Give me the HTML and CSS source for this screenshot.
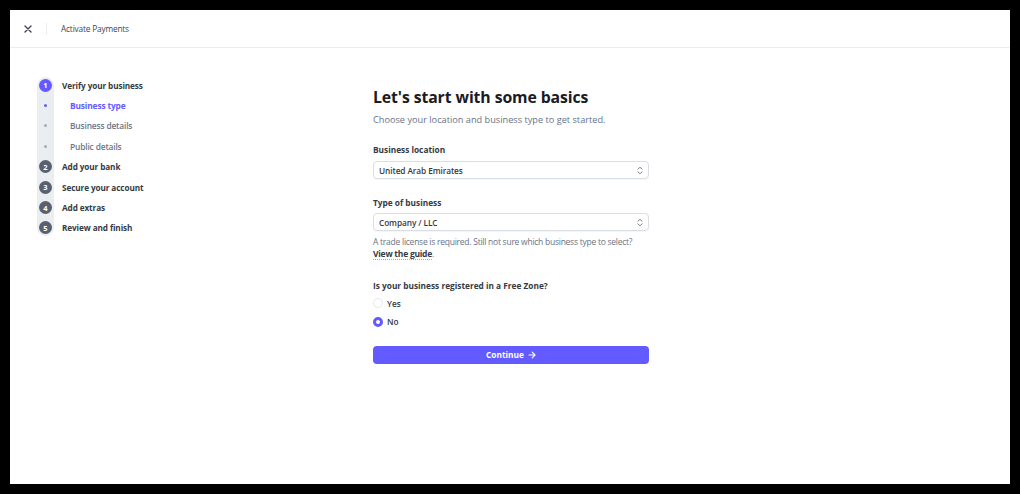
FILE: index.html
```html
<!DOCTYPE html>
<html lang="en">
<head>
  <meta charset="UTF-8">
  <meta name="viewport" content="width=device-width, initial-scale=1.0">
  <title>Activate Payments</title>
  <link rel="stylesheet" href="styles.css">
</head>
<body>
  <div class="app">
    <header class="topbar">
      <button class="close-btn" aria-label="Close">
        <svg width="8" height="8" viewBox="0 0 8 8"><path d="M1 1l6 6M7 1L1 7" stroke="#414552" stroke-width="1.4" stroke-linecap="round"/></svg>
      </button>
      <span class="divider"></span>
      <span class="topbar-title">Activate Payments</span>
    </header>

    <div class="page">
      <!-- 左側のステップ一覧 -->
      <nav class="steps">
        <ul class="step-list">
          <li class="step active"><span class="marker num">1</span><span class="step-label">Verify your business</span></li>
          <li class="step sub current"><span class="marker"><span class="dot"></span></span><span class="step-label">Business type</span></li>
          <li class="step sub"><span class="marker"><span class="dot"></span></span><span class="step-label">Business details</span></li>
          <li class="step sub"><span class="marker"><span class="dot"></span></span><span class="step-label">Public details</span></li>
          <li class="step"><span class="marker num">2</span><span class="step-label">Add your bank</span></li>
          <li class="step"><span class="marker num">3</span><span class="step-label">Secure your account</span></li>
          <li class="step"><span class="marker num">4</span><span class="step-label">Add extras</span></li>
          <li class="step"><span class="marker num">5</span><span class="step-label">Review and finish</span></li>
        </ul>
      </nav>

      <main class="form">
        <h1>Let's start with some basics</h1>
        <p class="subtitle">Choose your location and business type to get started.</p>

        <div class="field">
          <label class="field-label">Business location</label>
          <div class="select">
            <span>United Arab Emirates</span>
            <svg width="6" height="9" viewBox="0 0 6 9"><path d="M1 3.2L3 1.2l2 2M1 5.8l2 2 2-2" fill="none" stroke="#6c7688" stroke-width="1" stroke-linecap="round" stroke-linejoin="round"/></svg>
          </div>
        </div>

        <div class="field field-type">
          <label class="field-label">Type of business</label>
          <div class="select">
            <span>Company / LLC</span>
            <svg width="6" height="9" viewBox="0 0 6 9"><path d="M1 3.2L3 1.2l2 2M1 5.8l2 2 2-2" fill="none" stroke="#6c7688" stroke-width="1" stroke-linecap="round" stroke-linejoin="round"/></svg>
          </div>
          <p class="help">A trade license is required. Still not sure which business type to select?<br><a href="#" class="guide">View the guide</a>.</p>
        </div>

        <div class="field field-zone">
          <p class="field-label">Is your business registered in a Free Zone?</p>
          <div class="radio-row"><span class="radio"></span>Yes</div>
          <div class="radio-row"><span class="radio checked"></span>No</div>
        </div>

        <button class="continue-btn">Continue
          <svg width="8" height="8" viewBox="0 0 8 8"><path d="M1 4h6M4.2 1.2L7 4 4.2 6.8" fill="none" stroke="#fff" stroke-width="1.1" stroke-linecap="round" stroke-linejoin="round"/></svg>
        </button>
      </main>
    </div>
  </div>
</body>
</html>
```

FILE: styles.css
```css
body {
  margin: 0;
  padding: 10px;
  background-color: #000;
  font-family: 'Open Sans', 'Liberation Sans', sans-serif;
  color: #353a44;
}

.app {
  width: 1000px;
  height: 474px;
  background-color: #ffffff;
  overflow: hidden;
}

/* ヘッダー */
.topbar {
  display: flex;
  align-items: center;
  height: 37px;
  border-bottom: 1px solid #ebeef1;
  padding-left: 14px;
}

.close-btn {
  display: flex;
  align-items: center;
  justify-content: center;
  width: 8px;
  height: 8px;
  padding: 0;
  margin-top: 1px;
  border: none;
  background: none;
  cursor: pointer;
}

.divider {
  width: 1px;
  height: 12px;
  background-color: #ebeef1;
  margin: 1px 14px 0 14px;
}

.topbar-title {
  font-size: 8.3px;
  letter-spacing: -0.18px;
  color: #414552;
}

.page {
  display: grid;
  grid-template-columns: 363px 276px 1fr;
}

/* ステップ */
.steps {
  padding: 27px 0 0 27px;
}

.step-list {
  position: relative;
  list-style: none;
  margin: 0;
  padding: 0;
}

.step-list::before {
  content: "";
  position: absolute;
  left: 0;
  top: 2.4px;
  bottom: 2.4px;
  width: 17px;
  border-radius: 9px;
  background-color: #ebeef1;
}

.step {
  position: relative;
  display: flex;
  align-items: center;
  height: 20.4px;
  font-size: 8.2px;
  letter-spacing: -0.1px;
  font-weight: 700;
  color: #353a44;
}

.marker {
  display: flex;
  align-items: center;
  justify-content: center;
  width: 17px;
  flex-shrink: 0;
}

.marker.num {
  width: 13px;
  height: 13px;
  margin: 0 2px;
  border-radius: 50%;
  background-color: #596171;
  color: #fff;
  font-size: 7.5px;
  letter-spacing: 0;
  font-weight: 700;
}

.step.active .marker.num {
  background-color: #635bff;
}

.step-label {
  margin-left: 8px;
}

.step.sub .step-label {
  margin-left: 16px;
  font-size: 8.4px;
  letter-spacing: -0.15px;
  font-weight: 600;
  color: #6c7688;
}

.step.sub.current .step-label {
  color: #635bff;
  font-weight: 700;
}

.dot {
  width: 3px;
  height: 3px;
  border-radius: 50%;
  background-color: #a3acba;
}

.step.sub.current .dot {
  background-color: #635bff;
}

/* フォーム */
.form {
  padding-top: 39px;
}

h1 {
  margin: 0;
  font-size: 15.8px;
  line-height: 20px;
  font-weight: 700;
  color: #1a1b25;
  letter-spacing: -0.1px;
}

.subtitle {
  margin: 6px 0 0 0;
  font-size: 9.2px;
  line-height: 14px;
  color: #687385;
}

.field {
  margin-top: 17px;
}

.field-label {
  display: block;
  margin: 0 0 5px 0;
  font-size: 8.3px;
  line-height: 12px;
  font-weight: 700;
  color: #353a44;
}

.select {
  display: flex;
  align-items: center;
  justify-content: space-between;
  height: 18px;
  padding: 0 5px 0 5px;
  border: 1px solid #d8dee4;
  border-radius: 4px;
  box-sizing: border-box;
  box-shadow: 0 1px 1px rgba(0, 0, 0, 0.04);
  font-size: 8.3px;
  letter-spacing: -0.1px;
  font-weight: 600;
  color: #353a44;
}

.field-type {
  margin-top: 18px;
}

.field-type .field-label {
  margin-bottom: 4px;
}

.help {
  margin: 5px 0 0 0;
  font-size: 8.5px;
  letter-spacing: -0.25px;
  line-height: 12px;
  color: #687385;
}

.guide {
  color: #353a44;
  font-weight: 700;
  text-decoration: none;
  border-bottom: 1px dotted #a3acba;
}

.field-zone {
  margin-top: 20px;
}

.field-zone .field-label {
  margin-bottom: 2px;
}

.radio-row {
  display: flex;
  align-items: center;
  height: 18.4px;
  font-size: 8.3px;
  font-weight: 600;
  color: #353a44;
}

.radio {
  width: 10px;
  height: 10px;
  margin-right: 4px;
  border: 1px solid #e3e8ee;
  border-radius: 50%;
  box-sizing: border-box;
  background-color: #fff;
}

.radio.checked {
  border: 3.2px solid #635bff;
}

.continue-btn {
  display: flex;
  align-items: center;
  justify-content: center;
  gap: 4px;
  width: 100%;
  height: 18px;
  margin-top: 15px;
  padding: 0;
  border: none;
  border-radius: 4px;
  background-color: #635bff;
  color: #fff;
  font-family: inherit;
  font-size: 8.3px;
  font-weight: 700;
  cursor: pointer;
}
```
